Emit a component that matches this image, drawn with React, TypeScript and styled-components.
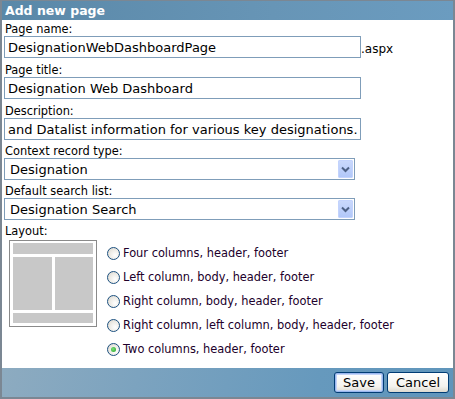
import React, { useState } from 'react';
import styled, { createGlobalStyle } from 'styled-components';

const GlobalStyle = createGlobalStyle`
  html, body {
    margin: 0;
    padding: 0;
    background: #fff;
  }
  body {
    font-family: Verdana, "DejaVu Sans", sans-serif;
  }
`;

const LAYOUTS = [
  'Four columns, header, footer',
  'Left column, body, header, footer',
  'Right column, body, header, footer',
  'Right column, left column, body, header, footer',
  'Two columns, header, footer',
];

const Dialog = styled.div`
  width: 455px;
  height: 399px;
  box-sizing: border-box;
  display: flex;
  flex-direction: column;
  border: 1px solid #7b8793;
  border-left-width: 2px;
  border-right-width: 2px;
  border-bottom-width: 2px;
  background: #fff;
`;

const Header = styled.div`
  height: 19px;
  line-height: 19px;
  padding-left: 3px;
  color: #fff;
  font-weight: bold;
  font-size: 12.5px;
  background: linear-gradient(to right, #5a88a8, #6795b6 60%, #6b9cc0);
`;

const Body = styled.div`
  flex: 1;
  padding: 2px 0 0 2px;
`;

const Field = styled.div<{ $gap?: number }>`
  margin-top: ${(p) => p.$gap ?? 0}px;
`;

const Label = styled.div`
  font-size: 11.4px;
  line-height: 14px;
  color: #000;
  padding-left: 1px;
`;

const Row = styled.div`
  display: flex;
  align-items: center;
`;

const TextInput = styled.input`
  box-sizing: border-box;
  width: 357px;
  height: 22px;
  margin: 0;
  padding: 0 3px;
  border: 1px solid #7f9db9;
  font-family: Verdana, "DejaVu Sans", sans-serif;
  font-size: 13px;
  color: #000;
  outline: none;
`;

const Suffix = styled.span`
  font-size: 12px;
  color: #000;
  padding-top: 3px;
`;

const Select = styled.div`
  box-sizing: border-box;
  width: 351px;
  height: 22px;
  border: 1px solid #7f9db9;
  display: flex;
  align-items: center;
  justify-content: space-between;
  padding: 0 1px 0 5px;
  font-size: 13px;
  color: #000;
`;

const DropButton = styled.span`
  width: 15px;
  height: 18px;
  box-sizing: border-box;
  border: 1px solid #c3d3fd;
  border-radius: 1px;
  background: linear-gradient(#c9d8fc, #b2c8f9);
  display: flex;
  align-items: center;
  justify-content: center;
`;

const LayoutRow = styled.div`
  display: flex;
  align-items: flex-start;
  margin-top: 2px;
`;

const Preview = styled.div`
  box-sizing: border-box;
  width: 88px;
  height: 87px;
  margin-left: 5px;
  border: 1px solid #8a8a8a;
  padding: 2px 3px 3px;
  display: grid;
  grid-template-columns: 1fr 1fr;
  grid-template-rows: 11px 1fr 10px;
  gap: 3px;
`;

const Block = styled.div<{ $wide?: boolean }>`
  background: #c8c8c8;
  grid-column: ${(p) => (p.$wide ? '1 / span 2' : 'auto')};
`;

const RadioList = styled.div`
  display: flex;
  flex-direction: column;
  margin-left: 10px;
  padding-top: 1px;
`;

const RadioRow = styled.label`
  display: flex;
  align-items: center;
  height: 24px;
  font-size: 11.4px;
  color: #21002b;
  cursor: pointer;
`;

const RadioDot = styled.span<{ $on: boolean }>`
  box-sizing: border-box;
  width: 13px;
  height: 13px;
  margin-right: 3px;
  border-radius: 50%;
  border: 1px solid #1c5180;
  background: radial-gradient(circle at 65% 65%, #fff 0%, #eceae4 55%, #d4d0c8 100%);
  display: flex;
  align-items: center;
  justify-content: center;
  &::after {
    content: '';
    display: ${(p) => (p.$on ? 'block' : 'none')};
    width: 5px;
    height: 5px;
    border-radius: 50%;
    background: radial-gradient(circle at 40% 40%, #7be07b, #21a121);
  }
`;

const Footer = styled.div`
  height: 29px;
  display: flex;
  align-items: center;
  justify-content: flex-end;
  gap: 3px;
  padding-right: 4px;
  background: linear-gradient(100deg, #8dabc0 0%, #7ca3bf 30%, #6699bd 70%, #5f95bb 100%);
`;

const Button = styled.button<{ $default?: boolean }>`
  box-sizing: border-box;
  height: 21px;
  padding: 0 8px;
  margin: 0;
  font-family: Verdana, "DejaVu Sans", sans-serif;
  font-size: 13px;
  color: #000;
  border: 1px solid #003c74;
  border-radius: 3px;
  background: linear-gradient(#ffffff, #f4f3ee 70%, #dcd9cf);
  box-shadow: ${(p) =>
    p.$default ? 'inset 0 0 0 1px #9ab7ef, inset 0 0 0 2px #c3d4f7' : 'none'};
  cursor: pointer;
`;

const Chevron = () => (
  <svg width="9" height="7" viewBox="0 0 9 7">
    <path d="M1 1.5 L4.5 5 L8 1.5" fill="none" stroke="#4d6185" strokeWidth="2" />
  </svg>
);

const App = () => {
  const [layout, setLayout] = useState(4);

  return (
    <>
      <GlobalStyle />
      <Dialog>
        <Header>Add new page</Header>
        <Body>
          <Field>
            <Label>Page name:</Label>
            <Row>
              <TextInput defaultValue="DesignationWebDashboardPage" />
              <Suffix>.aspx</Suffix>
            </Row>
          </Field>
          <Field $gap={5}>
            <Label>Page title:</Label>
            <TextInput defaultValue="Designation Web Dashboard" />
          </Field>
          <Field $gap={5}>
            <Label>Description:</Label>
            <TextInput defaultValue="and Datalist information for various key designations." />
          </Field>
          <Field $gap={4}>
            <Label>Context record type:</Label>
            <Select>
              <span>Designation</span>
              <DropButton>
                <Chevron />
              </DropButton>
            </Select>
          </Field>
          <Field $gap={4}>
            <Label>Default search list:</Label>
            <Select>
              <span>Designation Search</span>
              <DropButton>
                <Chevron />
              </DropButton>
            </Select>
          </Field>
          <Field $gap={4}>
            <Label>Layout:</Label>
            <LayoutRow>
              <Preview>
                <Block $wide />
                <Block />
                <Block />
                <Block $wide />
              </Preview>
              <RadioList>
                {LAYOUTS.map((name, i) => (
                  <RadioRow key={name} onClick={() => setLayout(i)}>
                    <RadioDot $on={layout === i} />
                    {name}
                  </RadioRow>
                ))}
              </RadioList>
            </LayoutRow>
          </Field>
        </Body>
        <Footer>
          <Button $default>Save</Button>
          <Button>Cancel</Button>
        </Footer>
      </Dialog>
    </>
  );
};

export default App;
